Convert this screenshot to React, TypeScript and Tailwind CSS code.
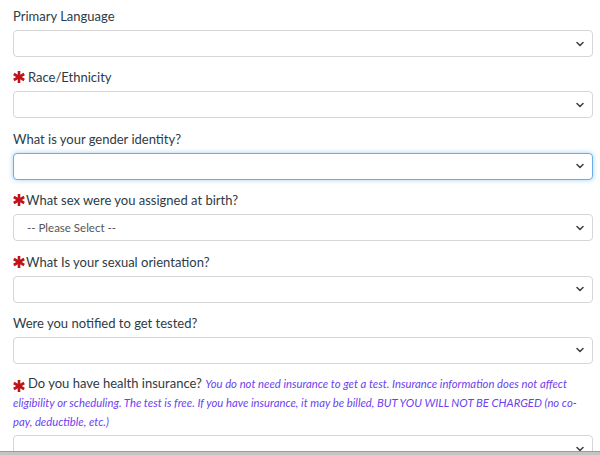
import { ChevronDown } from "lucide-react";

const fields = [
  { label: "Primary Language", required: false },
  { label: "Race/Ethnicity", required: true, space: true },
  { label: "What is your gender identity?", required: false, focused: true },
  { label: "What sex were you assigned at birth?", required: true, placeholder: "-- Please Select --" },
  { label: "What Is your sexual orientation?", required: true },
  { label: "Were you notified to get tested?", required: false },
];

// six-spoke required marker
const Star = ({ space }: { space?: boolean }) => (
  <svg
    viewBox="0 0 12 12"
    className={`inline-block h-[12px] w-[12px] shrink-0 ${space ? "mr-[3px]" : "mr-[1px]"}`}
    aria-hidden
  >
    <g stroke="#c0141a" strokeWidth="2.6">
      <line x1="6" y1="0" x2="6" y2="12" />
      <line x1="0.8" y1="3" x2="11.2" y2="9" />
      <line x1="0.8" y1="9" x2="11.2" y2="3" />
    </g>
  </svg>
);

const Select = ({ focused, placeholder }: { focused?: boolean; placeholder?: string }) => (
  <div
    className={`flex h-[27px] w-[580px] items-center justify-between rounded-[4px] border bg-white pl-[13px] pr-[6px] ${
      focused
        ? "border-[#6aaee8] shadow-[0_0_5px_rgba(102,175,233,0.6)]"
        : "border-[#d6d6d6]"
    }`}
  >
    <span className="text-[11.5px] text-[#555]">{placeholder ?? ""}</span>
    <ChevronDown className="h-[12px] w-[12px] text-[#444]" strokeWidth={3.2} />
  </div>
);

export default function App() {
  return (
    <div
      className="relative h-[455px] w-[600px] overflow-hidden bg-white pl-[13px] pt-[6px] text-[#2d3b45]"
      style={{ fontFamily: "Lato, 'Noto Sans', sans-serif" }}
    >
      <div className="flex flex-col gap-[10.4px]">
        {fields.map((f) => (
          <div key={f.label} className="flex flex-col gap-[4px]">
            <div className="flex h-[20px] items-center text-[13px] leading-[20px]">
              {f.required && <Star space={f.space} />}
              <span>{f.label}</span>
            </div>
            <Select focused={f.focused} placeholder={f.placeholder} />
          </div>
        ))}

        <div className="flex flex-col gap-[4px]">
          <p className="w-[582px] text-[13px] leading-[19px]">
            <span className="relative top-[1px] inline-block">
              <Star space />
            </span>
            <span>Do you have health insurance? </span>
            <span className="text-[11.3px] italic text-[#6c3ff0]">
              You do not need insurance to get a test. Insurance information does not affect
              eligibility or scheduling. The test is free. If you have insurance, it may be billed,
              BUT YOU WILL NOT BE CHARGED (no co-pay, deductible, etc.)
            </span>
          </p>
          <Select />
        </div>
      </div>

      <div className="absolute inset-x-0 bottom-0 h-[4px] border-t border-[#9a9a9a] bg-[#c4c4c4]" />
    </div>
  );
}
